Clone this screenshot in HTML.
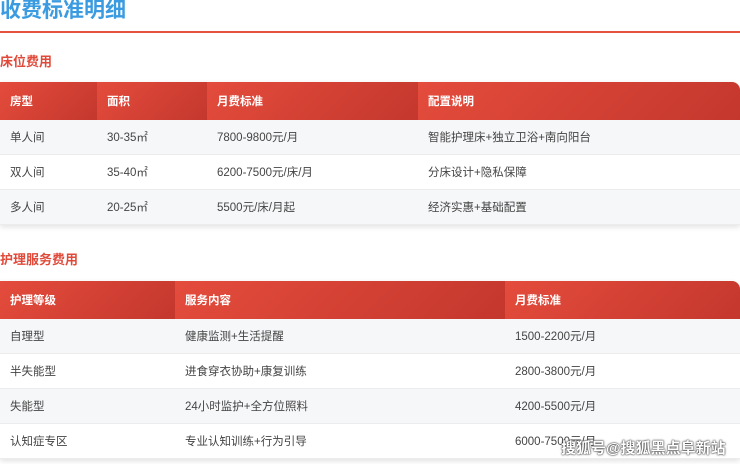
<!DOCTYPE html>
<html><head><meta charset="utf-8"><style>
body{margin:0;width:740px;height:464px;overflow:hidden;background:#fff;font-family:"Liberation Sans","Noto Sans CJK SC",sans-serif;position:relative}
.t{position:absolute;left:0;top:-6px;font-size:21px;font-weight:bold;color:#3b9be0}
.line{position:absolute;left:0;top:31px;width:740px;height:2px;background:#e5533f}
.s{position:absolute;left:0;font-size:13px;font-weight:bold;color:#e04a3a}
table{position:absolute;left:0;width:740px;border-collapse:collapse;font-size:11.5px;color:#444;box-shadow:0 2px 6px rgba(0,0,0,.12);border-radius:0 8px 0 0;overflow:hidden}
th{height:38px;padding:0 0 0 10px;text-align:left;color:#fff;font-weight:bold;background:linear-gradient(135deg,#e44c3c,#c4372d)}
td{height:34px;padding:0 0 0 10px;border-bottom:1px solid #ececec}
tr:nth-child(even) td{background:#f6f7f9}
.wm{position:absolute;left:561px;top:437px;font-size:15px;color:#fff;font-weight:bold;text-shadow:0 0 2px #333,0 0 1px #000}
</style></head><body>
<div class="t">收费标准明细</div><div class="line"></div>
<div class="s" style="top:51px">床位费用</div>
<table style="top:82px"><tr><th style="width:87px">房型</th><th style="width:100px">面积</th><th style="width:201px">月费标准</th><th>配置说明</th></tr>
<tr><td>单人间</td><td>30-35㎡</td><td>7800-9800元/月</td><td>智能护理床+独立卫浴+南向阳台</td></tr>
<tr><td>双人间</td><td>35-40㎡</td><td>6200-7500元/床/月</td><td>分床设计+隐私保障</td></tr>
<tr><td>多人间</td><td>20-25㎡</td><td>5500元/床/月起</td><td>经济实惠+基础配置</td></tr></table>
<div class="s" style="top:249px">护理服务费用</div>
<table style="top:281px"><tr><th style="width:165px">护理等级</th><th style="width:320px">服务内容</th><th>月费标准</th></tr>
<tr><td>自理型</td><td>健康监测+生活提醒</td><td>1500-2200元/月</td></tr>
<tr><td>半失能型</td><td>进食穿衣协助+康复训练</td><td>2800-3800元/月</td></tr>
<tr><td>失能型</td><td>24小时监护+全方位照料</td><td>4200-5500元/月</td></tr>
<tr><td>认知症专区</td><td>专业认知训练+行为引导</td><td>6000-7500元/月</td></tr></table>
<div class="wm">搜狐号@搜狐黑点阜新站</div>
</body></html>
